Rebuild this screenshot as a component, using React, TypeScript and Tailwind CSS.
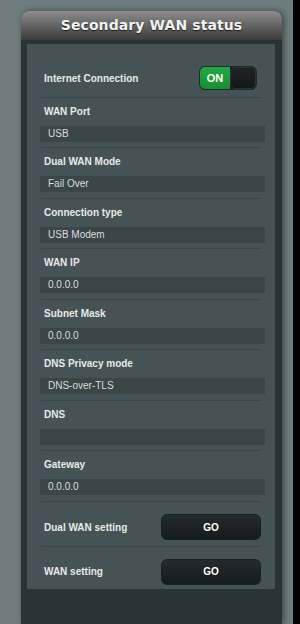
const rows: { label: string; value: string }[] = [
  { label: "WAN Port", value: "USB" },
  { label: "Dual WAN Mode", value: "Fail Over" },
  { label: "Connection type", value: "USB Modem" },
  { label: "WAN IP", value: "0.0.0.0" },
  { label: "Subnet Mask", value: "0.0.0.0" },
  { label: "DNS Privacy mode", value: "DNS-over-TLS" },
  { label: "DNS", value: "" },
  { label: "Gateway", value: "0.0.0.0" }
];

function Sep() {
  return <div className="h-px bg-[#3a4649]" />;
}

function GoButton() {
  return (
    <button className="flex h-[26px] w-[100px] items-center justify-center rounded-[6px] border border-[#1a1f21] bg-gradient-to-b from-[#242b2e] to-[#161b1d] text-[10px] font-bold text-white">
      GO
    </button>
  );
}

export default function App() {
  return (
    <div className="flex h-[624px] w-[300px] overflow-hidden bg-[#6e7c7f] font-['Liberation_Sans',Arial,sans-serif]">
      <div className="flex flex-1 pl-[21px] pr-[11px] pt-[11px]">
        <div className="flex flex-1 flex-col rounded-t-[8px] bg-[#2a3336] shadow-[2px_0_6px_rgba(0,0,0,0.45)]">
          <div className="flex h-[29px] items-center justify-center rounded-t-[8px] bg-gradient-to-b from-[#8e8e8e] to-[#3c3c3c]">
            <h1 className="font-['DejaVu_Sans',Verdana,sans-serif] text-[14px] font-bold tracking-[0.1px] text-[#f2f2f2] [text-shadow:0_1px_1px_rgba(0,0,0,0.7)]">
              Secondary WAN status
            </h1>
          </div>
          <div className="mx-[6px] mr-[7px] mt-[4px] bg-[#465356] px-[14px]">
            <div className="flex items-center justify-between pb-[6.5px] pt-[22px]">
              <span className="pl-[3px] text-[10px] font-bold text-[#e8e8e8]">Internet Connection</span>
              <div className="mr-[4px] flex h-[24px] w-[58px] overflow-hidden rounded-[6px] border border-[#23292b] bg-[#181c1e]">
                <div className="flex w-[30px] items-center justify-center bg-gradient-to-b from-[#25a843] to-[#17902f] text-[11px] font-bold text-white">
                  ON
                </div>
                <div className="flex-1 rounded-[5px] border border-[#2c3235] bg-gradient-to-b from-[#1f2426] to-[#141719]" />
              </div>
            </div>
            {rows.map((r) => (
              <div key={r.label}>
                <Sep />
                <div className="pb-[5.5px] pt-[7px]">
                  <div className="h-[14px] pl-[3px] text-[10px] font-bold leading-[14px] text-[#e8e8e8]">{r.label}</div>
                  <div className="-ml-px -mr-[4px] mt-[7px] h-[16px] bg-[#3b4649] pl-[8px] text-[10px] leading-[16px] text-[#dcdcdc]">
                    {r.value}
                  </div>
                </div>
              </div>
            ))}
            <Sep />
            <div className="flex items-center justify-between pb-[6px] pt-[12.5px]">
              <span className="pl-[3px] text-[10px] font-bold text-[#e8e8e8]">Dual WAN setting</span>
              <GoButton />
            </div>
            <Sep />
            <div className="flex items-center justify-between pb-[4px] pt-[11.5px]">
              <span className="pl-[3px] text-[10px] font-bold text-[#e8e8e8]">WAN setting</span>
              <GoButton />
            </div>
          </div>
        </div>
      </div>
      <div className="w-[7px] bg-black" />
    </div>
  );
}
